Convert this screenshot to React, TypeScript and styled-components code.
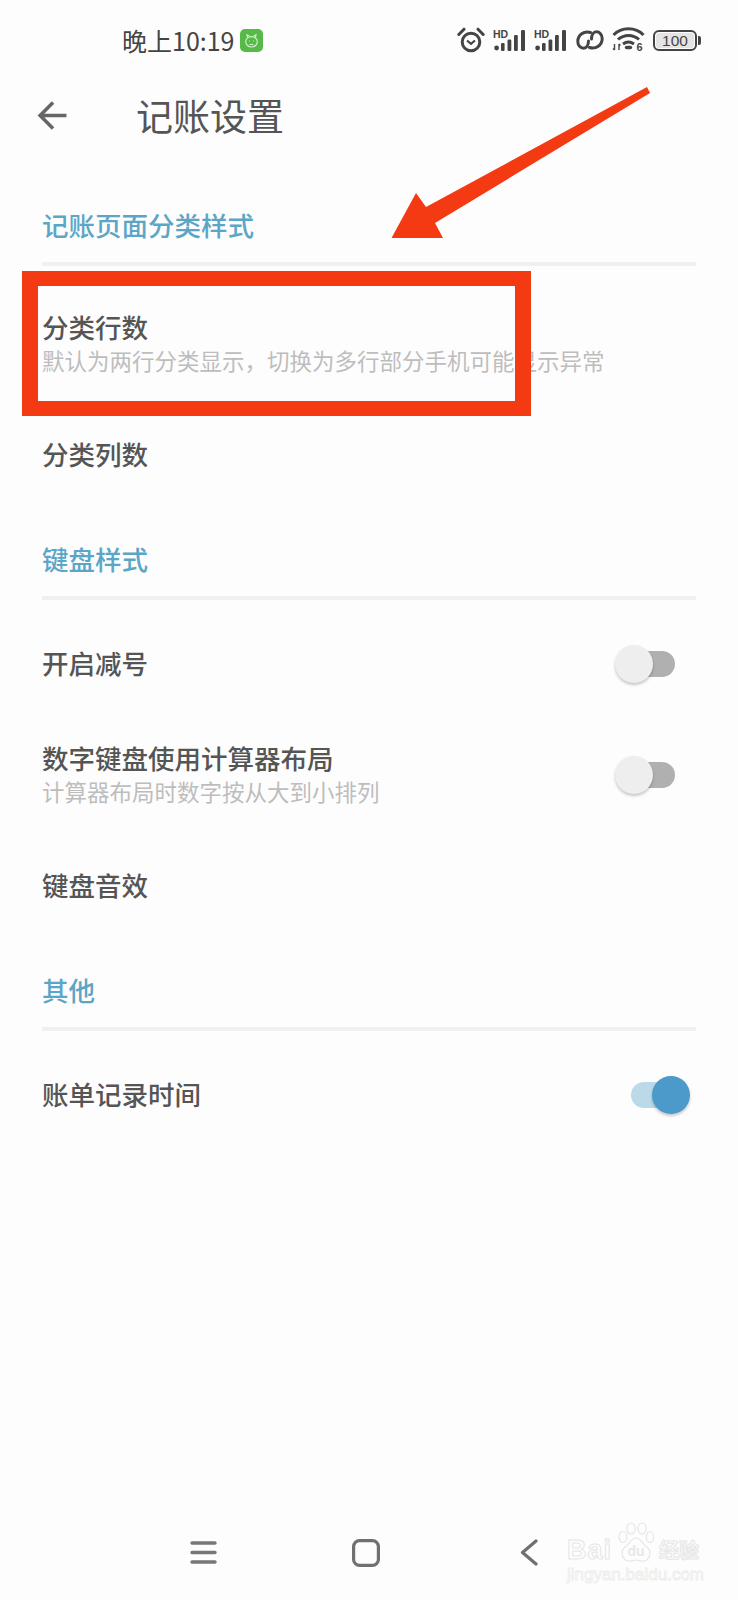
import React, {FC} from 'react';
import styled, {createGlobalStyle} from 'styled-components';

const GlobalStyle = createGlobalStyle`
  html, body {
    margin: 0;
    padding: 0;
    background: #fdfdfd;
  }
  body {
    font-family: 'Noto Sans CJK SC', 'Noto Sans', sans-serif;
  }
`;

const SignalIcon: FC = () => (
  <svg width="33" height="22" viewBox="0 0 33 22">
    <text x="0" y="9" fontSize="10.5" fontWeight="700" fontFamily="Liberation Sans" fill="#444">
      HD
    </text>
    <circle cx="3.6" cy="19" r="2.4" fill="#444" />
    <rect x="8" y="14" width="3.6" height="8" rx="1.2" fill="#444" />
    <rect x="14.5" y="10.5" width="3.8" height="11.5" rx="1.2" fill="#444" />
    <rect x="21" y="6" width="3.8" height="16" rx="1.2" fill="#444" />
    <rect x="28" y="1" width="4" height="21" rx="1.2" fill="#444" />
  </svg>
);

const StatusIcons: FC = () => (
  <StatusRight>
    <svg width="28" height="26" viewBox="0 0 28 26" fill="none" stroke="#444">
      <circle cx="14" cy="15" r="8.8" strokeWidth="3" />
      <path d="M10 13.5l4 3.4 4-3.4" strokeWidth="2.2" />
      <path d="M1.8 7.5L7 2.2M26.2 7.5L21 2.2" strokeWidth="3" strokeLinecap="round" />
    </svg>
    <SignalIcon />
    <SignalIcon />
    <svg width="28" height="20" viewBox="0 0 28 20" fill="none" stroke="#444" strokeWidth="3" strokeLinecap="round">
      <path d="M14.5 2.5C8 .5 1.8 5 1.8 11.5c0 4 2.700 6.700 5.700 6.700 3 0 5-3.200 5-7.200" />
      <path d="M13.500 17.500C20 19.500 26.200 15 26.200 8.500c0-4-2.700-6.700-5.700-6.700-3 0-5 3.200-5 7.200" />
    </svg>
    <svg width="33" height="28" viewBox="0 0 33 28" fill="none" stroke="#444" strokeWidth="3">
      <path d="M1.500 9C9.500 .8 23.500 .8 31.500 9" />
      <path d="M6 13.500c6-5.500 15-5.500 21 0" />
      <path d="M11 18c3.500-2.500 7.500-2.500 11 0" />
      <path d="M14.500 21.500h4" strokeWidth="3.400" strokeLinecap="round" />
      <path d="M2.500 18v6M1 22.500l1.500 1.500M7 18v6M8.500 19.500L7 18" strokeWidth="1.400" />
      <text x="24.500" y="25" fontSize="11" fontWeight="700" fontFamily="Liberation Sans" fill="#444" stroke="none">
        6
      </text>
    </svg>
    <Battery>
      <BatteryBody>
        <BatteryLevel>100</BatteryLevel>
      </BatteryBody>
      <BatteryCap />
    </Battery>
  </StatusRight>
);

const Toggle: FC<{on?: boolean}> = ({on}) => (
  <ToggleWrap>
    <Track $on={on} />
    <Knob $on={on} />
  </ToggleWrap>
);

const Row: FC<{title: string; sub?: string; on?: boolean; toggle?: boolean}> = ({
  title,
  sub,
  on,
  toggle,
}) => (
  <RowWrap $tall={!!sub}>
    <RowText>
      <RowTitle>{title}</RowTitle>
      {sub && <RowSub>{sub}</RowSub>}
    </RowText>
    {toggle && <Toggle on={on} />}
  </RowWrap>
);

export default function App() {
  return (
    <Page>
      <GlobalStyle />
      <StatusBar>
        <Time>晚上10:19</Time>
        <AppBadge>
          <svg width="17" height="17" viewBox="0 0 17 17" fill="none" stroke="#d8f2cf" strokeWidth="1.100">
            <ellipse cx="8.500" cy="9.800" rx="5.800" ry="5.200" />
            <path d="M4.500 5.500L4 2.800l2.500 1.500M12.500 5.500l.5-2.700L10.500 4.300" />
            <path d="M6 9h.8M10.200 9h.8M6.500 12.500h4" />
          </svg>
        </AppBadge>
        <StatusIcons />
      </StatusBar>

      <Toolbar>
        <BackIcon viewBox="0 0 30 30" fill="none" stroke="#666" strokeWidth="3.400">
          <path d="M28.500 15H3M15.500 2.500L3 15l12.500 12.500" />
        </BackIcon>
        <Title>记账设置</Title>
      </Toolbar>

      <Section $first>
        <SectionTitle>记账页面分类样式</SectionTitle>
        <Divider />
        <List $pad={22}>
          <Row title="分类行数" sub={'默认为两行分类显示\uFF0C切换为多行部分手机可能显示异常'} />
          <Row title="分类列数" />
        </List>
      </Section>

      <Section>
        <SectionTitle>键盘样式</SectionTitle>
        <Divider />
        <List $pad={9}>
          <Row title="开启减号" toggle />
          <Row title="数字键盘使用计算器布局" sub="计算器布局时数字按从大到小排列" toggle />
          <Row title="键盘音效" />
        </List>
      </Section>

      <Section>
        <SectionTitle>其他</SectionTitle>
        <Divider />
        <List $pad={9}>
          <Row title="账单记录时间" toggle on />
        </List>
      </Section>

      <NavBar>
        <svg width="27" height="23" viewBox="0 0 27 23" stroke="#777" strokeWidth="3.400" strokeLinecap="round">
          <path d="M2 2h23M2 11.500h23M2 21h23" />
        </svg>
        <svg width="28" height="28" viewBox="0 0 28 28" fill="none" stroke="#707070" strokeWidth="3.200">
          <rect x="1.600" y="1.600" width="24.800" height="24.800" rx="6" />
        </svg>
        <svg width="18" height="27" viewBox="0 0 18 27" fill="none" stroke="#707070" strokeWidth="3.200" strokeLinecap="round" strokeLinejoin="round">
          <path d="M16 2L2.500 13.500 16 25" />
        </svg>
      </NavBar>

      <Watermark>
        <WatermarkTop>
          <WatermarkLetters>Bai</WatermarkLetters>
          <svg width="36" height="42" viewBox="0 0 36 42" fill="#fdfdfd" stroke="#e6e6e6" strokeWidth="1.200">
            <ellipse cx="5" cy="15" rx="4" ry="5.500" />
            <ellipse cx="13" cy="6.500" rx="4.200" ry="5.500" />
            <ellipse cx="24" cy="6.500" rx="4.200" ry="5.500" />
            <ellipse cx="32" cy="15" rx="3.600" ry="5.500" />
            <path d="M18 16c5 0 6 6 11 9 5 4 3 13-3 14-3 .6-5-1-8-1s-5 1.600-8 1C4 38 2 29 7 25c5-3 6-9 11-9z" />
            <text x="18" y="34" fontSize="14" fontWeight="700" textAnchor="middle" fontFamily="Liberation Sans" fill="#e8e8e8" stroke="none">
              du
            </text>
          </svg>
          <WatermarkCn>经验</WatermarkCn>
        </WatermarkTop>
        <WatermarkUrl>jingyan.baidu.com</WatermarkUrl>
      </Watermark>

      <RedBox />
      <RedArrow viewBox="391 87 260 152">
        <path d="M647 87l3 6-215 130 8 15h-51.500L416 193l10 14z" fill="#f33a12" />
      </RedArrow>
    </Page>
  );
}

const Page = styled.div`
  position: relative;
  width: 738px;
  height: 1600px;
  overflow: hidden;
  display: flex;
  flex-direction: column;
  background: #fdfdfd;
`;

const StatusBar = styled.div`
  height: 80px;
  display: flex;
  align-items: center;
  padding: 0 37px 0 122px;
  box-sizing: border-box;
  color: #444;
`;

const Time = styled.div`
  font-size: 25px;
  line-height: 30px;
`;

const AppBadge = styled.div`
  width: 23px;
  height: 23px;
  margin-left: 6px;
  border-radius: 5px;
  background: #56b948;
  display: flex;
  align-items: center;
  justify-content: center;
`;

const StatusRight = styled.div`
  margin-left: auto;
  display: flex;
  align-items: center;
  gap: 8.200px;
`;

const Battery = styled.div`
  display: flex;
  align-items: center;
`;

const BatteryBody = styled.div`
  width: 44px;
  height: 21px;
  box-sizing: border-box;
  border: 2px solid #444;
  border-radius: 6px;
  padding: 1px;
  display: flex;
`;

const BatteryLevel = styled.div`
  flex: 1;
  border-radius: 3px;
  background: #e4e4e4;
  color: #444;
  font-family: 'Liberation Sans', sans-serif;
  font-size: 15.500px;
  line-height: 15px;
  text-align: center;
`;

const BatteryCap = styled.div`
  width: 3px;
  height: 9px;
  margin-left: 1px;
  border-radius: 0 2px 2px 0;
  background: #444;
`;

const Toolbar = styled.div`
  height: 70px;
  display: flex;
  align-items: center;
  padding-left: 37px;
`;

const BackIcon = styled.svg`
  width: 31px;
  height: 31px;
  flex-shrink: 0;
`;

const Title = styled.div`
  margin-left: 68px;
  font-size: 37px;
  line-height: 50px;
  color: #555;
`;

const Section = styled.div<{$first?: boolean}>`
  padding: 0 42px;
  margin-top: ${p => (p.$first ? 56 : 30)}px;
`;

const SectionTitle = styled.div`
  height: 40px;
  font-size: 26.500px;
  line-height: 37px;
  font-weight: 500;
  color: #5ba6c6;
`;

const Divider = styled.div`
  height: 4px;
  margin-top: 16px;
  background: #f0f0f0;
`;

const List = styled.div<{$pad: number}>`
  padding-top: ${p => p.$pad}px;
`;

const RowWrap = styled.div<{$tall?: boolean}>`
  height: ${p => (p.$tall ? 112 : 110)}px;
  display: flex;
  align-items: center;
  justify-content: space-between;
`;

const RowText = styled.div`
  display: flex;
  flex-direction: column;
  padding-bottom: 3px;
`;

const RowTitle = styled.div`
  font-size: 26.500px;
  line-height: 35px;
  font-weight: 500;
  color: #555;
`;

const RowSub = styled.div`
  font-size: 22.500px;
  line-height: 32px;
  color: #bdbdbd;
`;

const ToggleWrap = styled.div`
  position: relative;
  flex-shrink: 0;
  width: 75px;
  height: 38px;
  margin-right: 6px;
`;

const Track = styled.div<{$on?: boolean}>`
  position: absolute;
  top: 6px;
  left: ${p => (p.$on ? 16 : 18)}px;
  width: ${p => (p.$on ? 44 : 42)}px;
  height: 26px;
  border-radius: 13px;
  background: ${p => (p.$on ? '#bcd9ea' : '#b0b0b0')};
`;

const Knob = styled.div<{$on?: boolean}>`
  position: absolute;
  top: 0;
  left: ${p => (p.$on ? 37 : 0)}px;
  width: 38px;
  height: 38px;
  border-radius: 50%;
  background: ${p => (p.$on ? '#4b9ac9' : '#eeeeee')};
  box-shadow: 0 2px 3px rgba(0, 0, 0, 0.22);
`;

const NavBar = styled.div`
  margin-top: auto;
  height: 78px;
  padding: 0 0 17px 190px;
  box-sizing: border-box;
  display: grid;
  grid-template-columns: 162px 168px auto;
  align-items: center;
`;

const Watermark = styled.div`
  position: absolute;
  left: 567px;
  top: 1522px;
  width: 132px;
  display: flex;
  flex-direction: column;
`;

const WatermarkTop = styled.div`
  height: 42px;
  display: flex;
  align-items: flex-end;

  svg {
    margin-left: 3px;
    flex-shrink: 0;
  }
`;

const WatermarkLetters = styled.div`
  width: 48px;
  margin-bottom: -4px;
  font-family: 'Liberation Sans', sans-serif;
  font-size: 27px;
  line-height: 36px;
  font-weight: 700;
  letter-spacing: 1px;
  color: #fdfdfd;
  -webkit-text-stroke: 1px #e6e6e6;
`;

const WatermarkCn = styled.div`
  margin-left: 5px;
  margin-bottom: -4px;
  font-size: 20px;
  line-height: 36px;
  font-weight: 700;
  color: #fdfdfd;
  -webkit-text-stroke: 1px #e6e6e6;
  white-space: nowrap;
`;

const WatermarkUrl = styled.div`
  margin-top: 1px;
  font-family: 'Liberation Sans', sans-serif;
  font-size: 17px;
  line-height: 20px;
  color: #fdfdfd;
  -webkit-text-stroke: 0.800px #ececec;
  white-space: nowrap;
`;

const RedBox = styled.div`
  position: absolute;
  left: 22px;
  top: 271px;
  width: 509px;
  height: 145px;
  box-sizing: border-box;
  border-style: solid;
  border-color: #f33a12;
  border-width: 15px 16px 15px 16px;
`;

const RedArrow = styled.svg`
  position: absolute;
  left: 391px;
  top: 87px;
  width: 260px;
  height: 152px;
`;
